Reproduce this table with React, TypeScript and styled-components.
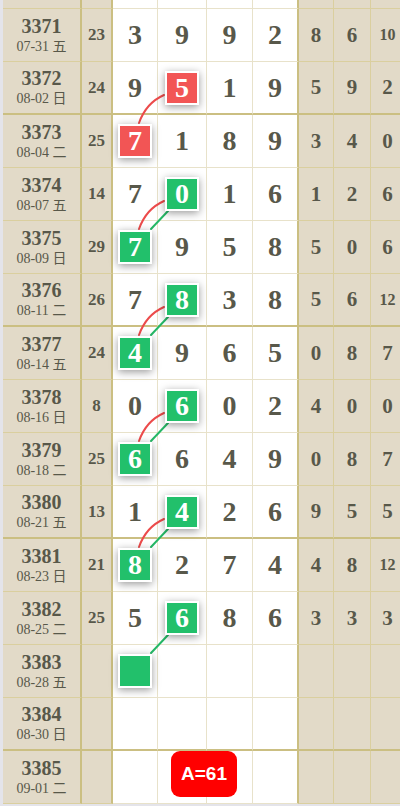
import { createGlobalStyle, styled } from "styled-components";

type Mark = { col: number; color: "red" | "green"; value: number | null };

type Draw = {
  issue: string;
  date: string;
  wd: string;
  sum?: number;
  digits: (number | null)[];
  stats: (number | null)[];
  mark?: Mark;
  badge?: string;
};

const draws: Draw[] = [
  { issue: "3371", date: "07-31", wd: "五", sum: 23, digits: [3, 9, 9, 2], stats: [8, 6, 10] },
  { issue: "3372", date: "08-02", wd: "日", sum: 24, digits: [9, 5, 1, 9], stats: [5, 9, 2], mark: { col: 1, color: "red", value: 5 } },
  { issue: "3373", date: "08-04", wd: "二", sum: 25, digits: [7, 1, 8, 9], stats: [3, 4, 0], mark: { col: 0, color: "red", value: 7 } },
  { issue: "3374", date: "08-07", wd: "五", sum: 14, digits: [7, 0, 1, 6], stats: [1, 2, 6], mark: { col: 1, color: "green", value: 0 } },
  { issue: "3375", date: "08-09", wd: "日", sum: 29, digits: [7, 9, 5, 8], stats: [5, 0, 6], mark: { col: 0, color: "green", value: 7 } },
  { issue: "3376", date: "08-11", wd: "二", sum: 26, digits: [7, 8, 3, 8], stats: [5, 6, 12], mark: { col: 1, color: "green", value: 8 } },
  { issue: "3377", date: "08-14", wd: "五", sum: 24, digits: [4, 9, 6, 5], stats: [0, 8, 7], mark: { col: 0, color: "green", value: 4 } },
  { issue: "3378", date: "08-16", wd: "日", sum: 8, digits: [0, 6, 0, 2], stats: [4, 0, 0], mark: { col: 1, color: "green", value: 6 } },
  { issue: "3379", date: "08-18", wd: "二", sum: 25, digits: [6, 6, 4, 9], stats: [0, 8, 7], mark: { col: 0, color: "green", value: 6 } },
  { issue: "3380", date: "08-21", wd: "五", sum: 13, digits: [1, 4, 2, 6], stats: [9, 5, 5], mark: { col: 1, color: "green", value: 4 } },
  { issue: "3381", date: "08-23", wd: "日", sum: 21, digits: [8, 2, 7, 4], stats: [4, 8, 12], mark: { col: 0, color: "green", value: 8 } },
  { issue: "3382", date: "08-25", wd: "二", sum: 25, digits: [5, 6, 8, 6], stats: [3, 3, 3], mark: { col: 1, color: "green", value: 6 } },
  { issue: "3383", date: "08-28", wd: "五", digits: [null, null, null, null], stats: [null, null, null], mark: { col: 0, color: "green", value: null } },
  { issue: "3384", date: "08-30", wd: "日", digits: [null, null, null, null], stats: [null, null, null] },
  { issue: "3385", date: "09-01", wd: "二", digits: [null, null, null, null], stats: [null, null, null], badge: "A=61" },
];

// connectors between a mark in column 2 and the mark below it in column 1
const links: { row: number; arc: boolean; line: boolean }[] = [
  { row: 1, arc: true, line: false },
  { row: 3, arc: true, line: true },
  { row: 5, arc: true, line: true },
  { row: 7, arc: true, line: true },
  { row: 9, arc: true, line: true },
  { row: 11, arc: false, line: true },
];

const ROW_H = 53;
const TOP = 9;

const ink = "#58584a";
const thick = "#cbbf82";
const serif = `"Liberation Serif", "Noto Sans CJK SC", serif`;

const GlobalStyle = createGlobalStyle`
  body {
    margin: 0;
    background: #ffffff;
  }
`;

const Page = styled.div`
  width: 400px;
  height: 806px;
  overflow: hidden;
  box-sizing: border-box;
  padding-left: 3px;
  background: #e4e4ea;
  font-family: ${serif};
  color: ${ink};
`;

const Chart = styled.div`
  position: relative;
  display: flex;
  flex-direction: column;
  width: max-content;
`;

const GridRow = styled.div<{ $h: number }>`
  position: relative;
  display: grid;
  grid-template-columns: 79px 31px 45px 49px 46px 46px 35px 37px 34px 40px;
  height: ${(p) => p.$h}px;
`;

const Cell = styled.div<{ $white?: boolean; $thickRight?: boolean; $thickBottom?: boolean }>`
  box-sizing: border-box;
  display: flex;
  align-items: center;
  justify-content: center;
  background: ${(p) => (p.$white ? "#ffffff" : "#e2dac8")};
  border-right: ${(p) => (p.$thickRight ? `2px solid ${thick}` : `1px solid ${p.$white ? "#e8e2ca" : "#dacf9f"}`)};
  border-bottom: ${(p) => (p.$thickBottom ? `2px solid ${thick}` : `1px solid ${p.$white ? "#e8e2ca" : "#dacf9f"}`)};
`;

const IssueCell = styled(Cell)`
  flex-direction: column;
  gap: 3px;
`;

const IssueNo = styled.div`
  font-size: 20px;
  font-weight: bold;
  line-height: 20px;
`;

const IssueDate = styled.div`
  font-size: 14px;
  line-height: 16px;
`;

const SumText = styled.span`
  font-size: 17px;
  font-weight: bold;
`;

const Digit = styled.span`
  font-size: 28px;
  font-weight: bold;
  line-height: 1;
`;

const Stat = styled.span<{ $small?: boolean }>`
  font-size: ${(p) => (p.$small ? 16 : 21)}px;
  font-weight: bold;
`;

const Ball = styled.div<{ $color: "red" | "green" }>`
  position: relative;
  z-index: 2;
  box-sizing: border-box;
  width: 34px;
  height: 34px;
  border: 2px solid #ffffff;
  background: ${(p) => (p.$color === "red" ? "#f25555" : "#22c06b")};
  box-shadow: 0 2px 8px rgba(0, 0, 0, 0.4);
  color: #ffffff;
  font-size: 28px;
  font-weight: bold;
  display: flex;
  align-items: center;
  justify-content: center;
  line-height: 1;
`;

const Links = styled.svg`
  position: absolute;
  left: 0;
  top: 0;
  z-index: 1;
  pointer-events: none;
`;

const Badge = styled.div`
  position: absolute;
  left: 168px;
  top: 0;
  z-index: 3;
  width: 66px;
  height: 46px;
  border-radius: 9px;
  background: #ff0000;
  color: #ffffff;
  font-family: "Liberation Sans", Arial, sans-serif;
  font-weight: bold;
  font-size: 19px;
  display: flex;
  align-items: center;
  justify-content: center;
`;

function StubRow() {
  return (
    <GridRow $h={TOP}>
      <Cell $thickRight />
      <Cell $thickRight />
      <Cell $white />
      <Cell $white />
      <Cell $white />
      <Cell $white $thickRight />
      <Cell />
      <Cell />
      <Cell />
      <Cell />
    </GridRow>
  );
}

function DrawRow({ d, idx }: { d: Draw; idx: number }) {
  const groupEnd = (idx + 1) % 4 === 2;
  return (
    <GridRow $h={ROW_H}>
      <IssueCell $thickRight $thickBottom={groupEnd}>
        <IssueNo>{d.issue}</IssueNo>
        <IssueDate>
          {d.date} {d.wd}
        </IssueDate>
      </IssueCell>
      <Cell $thickRight $thickBottom={groupEnd}>
        {d.sum !== undefined && <SumText>{d.sum}</SumText>}
      </Cell>
      {d.digits.map((n, i) => (
        <Cell key={i} $white $thickRight={i === 3} $thickBottom={groupEnd}>
          {d.mark && d.mark.col === i ? (
            <Ball $color={d.mark.color}>{d.mark.value}</Ball>
          ) : (
            n !== null && <Digit>{n}</Digit>
          )}
        </Cell>
      ))}
      {[...d.stats, null].map((n, i) => (
        <Cell key={"s" + i} $thickBottom={groupEnd}>
          {n !== null && <Stat $small={n > 9}>{n}</Stat>}
        </Cell>
      ))}
      {d.badge && <Badge>{d.badge}</Badge>}
    </GridRow>
  );
}

export default function App() {
  // centres of the two marked columns, chart coordinates
  const hiX = 179;
  const loX = 132;
  return (
    <Page>
      <GlobalStyle />
      <Chart>
        <StubRow />
        {draws.map((d, i) => (
          <DrawRow key={d.issue} d={d} idx={i} />
        ))}
        <Links width={400} height={806}>
          {links.map((l) => {
            const cu = TOP + ROW_H * l.row + 26;
            const cl = cu + ROW_H;
            return (
              <g key={l.row} fill="none" strokeWidth={2} strokeLinecap="round">
                {l.arc && (
                  <path
                    d={`M ${hiX - 18} ${cu + 7} Q ${hiX - 36} ${cu + 15} ${loX + 4} ${cl - 18}`}
                    stroke="#ec4b4b"
                  />
                )}
                {l.line && (
                  <line x1={hiX - 14} y1={cu + 17} x2={loX + 16} y2={cl - 18} stroke="#25b866" />
                )}
              </g>
            );
          })}
        </Links>
      </Chart>
    </Page>
  );
}
